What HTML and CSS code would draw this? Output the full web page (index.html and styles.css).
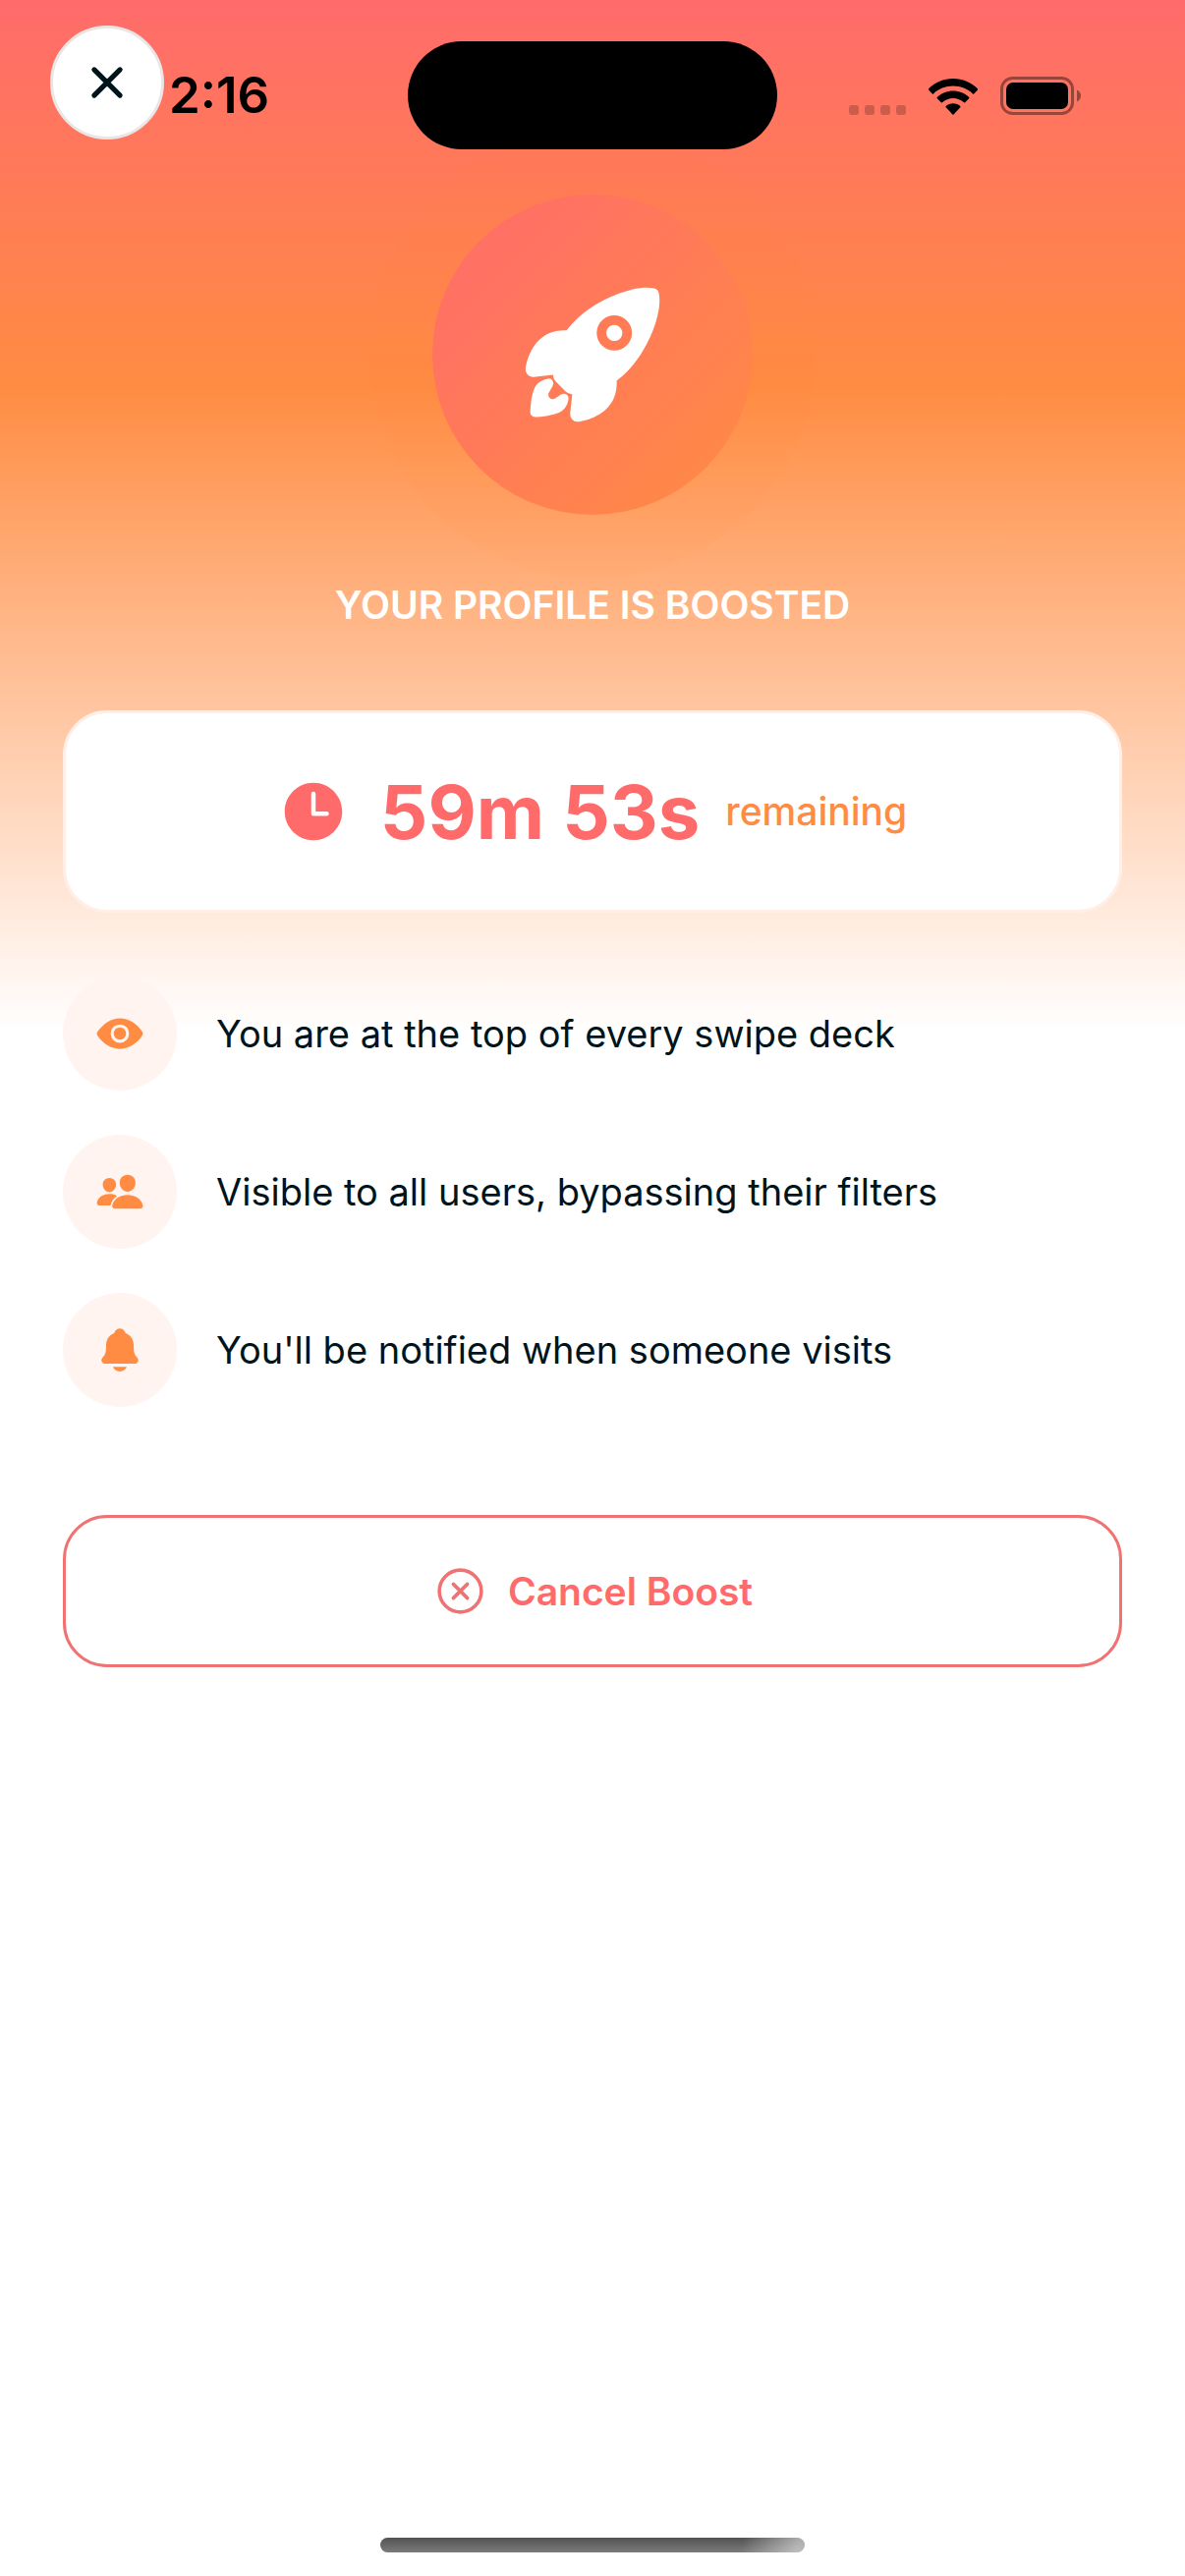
FILE: index.html
```html
<!DOCTYPE html>
<html lang="en">
<head>
  <meta charset="utf-8">
  <meta name="viewport" content="width=device-width, initial-scale=1">
  <title>Profile Boost</title>
  <link rel="stylesheet" href="styles.css">
</head>
<body>
  <div class="screen">
    <header class="status-bar">
      <span class="status-time">2:16</span>
      <span class="island"></span>
      <div class="status-icons">
        <svg class="signal" viewBox="0 0 58 10" aria-hidden="true">
          <rect x="0" width="10" height="10" rx="3"/><rect x="16" width="10" height="10" rx="3"/><rect x="32" width="10" height="10" rx="3"/><rect x="48" width="10" height="10" rx="3"/>
        </svg>
        <svg class="wifi" viewBox="0 0 50 37" aria-hidden="true">
          <path d="M25 0C34.700 0 43.500 3.800 50 10.300c.4.4.4.8 0 1.200L46.200 15.400c-.4.4-.8.4-1.200 0C39.800 10.400 32.800 7.500 25 7.500S10.200 10.400 5 15.400c-.4.4-.8.4-1.200 0L0 11.500c-.4-.4-.4-.8 0-1.200C6.500 3.800 15.300 0 25 0z"/>
          <path d="M25 12.500c6.200 0 11.900 2.400 16.200 6.400.4.4.4.9 0 1.300l-4 4c-.4.4-.8.4-1.200 0-2.900-2.700-6.800-4.300-11-4.300s-8.100 1.600-11 4.300c-.4.4-.8.4-1.200 0l-4-4c-.4-.4-.4-.9 0-1.300 4.300-4 10-6.400 16.200-6.400z"/>
          <path d="M25 25.300c2.800 0 5.300 1 7.300 2.700.4.400.4.8 0 1.200l-6.700 7.300c-.4.400-.8.400-1.200 0l-6.700-7.300c-.4-.4-.4-.8 0-1.200 2-1.700 4.500-2.700 7.300-2.700z"/>
        </svg>
        <svg class="battery" viewBox="0 0 82 39" aria-hidden="true">
          <rect class="battery-shell" x="1.500" y="1.500" width="72" height="36" rx="11"/>
          <rect x="6" y="6" width="63" height="27" rx="7"/>
          <path class="battery-tip" d="M78 13.500c2.400.9 4 3.200 4 6s-1.600 5.100-4 6z"/>
        </svg>
      </div>
    </header>

    <button class="close-button" type="button" aria-label="Close">
      <svg viewBox="0 0 512 512" aria-hidden="true"><path d="M368 368L144 144M368 144L144 368"/></svg>
    </button>

    <main class="content">
      <div class="hero">
        <svg class="hero-icon" viewBox="0 0 512 512" aria-hidden="true">
          <path d="M328.850 156.790a26.690 26.690 0 1018.880 7.810 26.600 26.600 0 00-18.880-7.810z"/>
          <path d="M477.440 50.060a.29.29 0 010-.09 20.400 20.400 0 00-15.130-15.300c-29.800-7.270-76.680.48-128.630 21.280-52.360 21-101.420 52-134.580 85.220A320.700 320.700 0 00169.550 175c-22.330-1-42 2.180-58.570 9.410-57.740 25.410-74.230 90.440-78.620 117.140a25 25 0 0027.190 29h.13l64.320-7.020c.08.82.17 1.570.24 2.260a34.360 34.360 0 009.900 20.720l31.390 31.410a34.270 34.270 0 0020.710 9.910l2.150.23-7 64.240v.13A25 25 0 00206 480a25.250 25.250 0 004.150-.34C237 475.340 302 459.050 327.340 401c7.170-16.460 10.340-36.050 9.450-58.340a314.780 314.780 0 0033.950-29.550c33.430-33.260 64.530-81.920 85.310-133.520 20.690-51.360 28.480-98.590 21.390-129.530zM370.380 224.940a58.770 58.770 0 110-83.070 58.300 58.300 0 010 83.070z"/>
          <path d="M161.930 386.440a16 16 0 00-11 2.670c-6.390 4.370-12.810 8.690-19.290 12.900-13.110 8.520-28.790-6.440-21-20l12.150-21a16 16 0 00-15.160-24.910A61.250 61.250 0 0072 353.560c-3.660 3.670-14.790 14.810-20.780 57.260A357.940 357.940 0 0048 447.590 16 16 0 0064 464h.4a359.870 359.870 0 0036.800-3.200c42.470-6 53.610-17.140 57.270-20.800a60.490 60.490 0 0017.390-35.740 16 16 0 00-13.930-17.820z"/>
        </svg>
      </div>

      <h1 class="title">YOUR PROFILE IS BOOSTED</h1>

      <section class="timer" aria-label="Time remaining">
        <svg class="timer-icon" viewBox="0 0 512 512" aria-hidden="true">
          <path d="M256 48C141.130 48 48 141.130 48 256s93.130 208 208 208 208-93.130 208-208S370.870 48 256 48zm96 240h-96a16 16 0 01-16-16V128a16 16 0 0132 0v128h80a16 16 0 010 32z"/>
        </svg>
        <span class="timer-value">59m 53s</span>
        <span class="timer-label">remaining</span>
      </section>

      <ul class="benefits">
        <li class="benefit">
          <span class="benefit-icon">
            <svg viewBox="0 0 512 512" aria-hidden="true"><circle cx="256" cy="256" r="64"/><path d="M490.840 238.600c-26.460-40.920-60.790-75.680-99.270-100.530C349 110.550 302 96 255.660 96c-42.520 0-84.330 12.150-124.270 36.110-40.730 24.430-77.630 60.120-109.680 106.070a31.920 31.920 0 00-.64 35.540c26.410 41.330 60.400 76.140 98.280 100.650C162 402 207.900 416 255.660 416c46.710 0 93.810-14.430 136.200-41.720 38.460-24.770 72.720-59.660 99.080-100.920a32.200 32.200 0 00-.1-34.760zM256 352a96 96 0 1196-96 96.110 96.110 0 01-96 96z"/></svg>
          </span>
          <span>You are at the top of every swipe deck</span>
        </li>
        <li class="benefit">
          <span class="benefit-icon">
            <svg viewBox="0 0 512 512" aria-hidden="true"><path d="M336 256c-20.560 0-40.440-9.180-56-25.840-15.130-16.250-24.370-37.920-26-61-1.740-24.620 5.770-47.260 21.140-63.760S312 80 336 80c23.830 0 45.380 9.060 60.700 25.520 15.470 16.620 23 39.220 21.260 63.630-1.670 23.110-10.900 44.770-26 61C376.440 246.820 356.570 256 336 256zM467.830 432H204.180a27.710 27.710 0 01-22-10.670 30.220 30.220 0 01-5.260-25.790c8.420-33.810 29.280-61.850 60.320-81.080C264.790 297.400 299.860 288 336 288c36.850 0 71 9 98.710 26.050 31.110 19.130 52 47.330 60.380 81.550a30.270 30.270 0 01-5.320 25.780A27.680 27.680 0 01467.830 432zM147 260c-35.190 0-66.130-32.720-69-72.930-1.420-20.600 5-39.650 18-53.620 12.860-13.830 31-21.450 51-21.450s38 7.660 50.930 21.570c13.100 14.080 19.500 33.090 18 53.520-2.870 40.200-33.800 72.910-68.930 72.910zM212.660 291.450c-17.590-8.600-40.420-12.900-65.650-12.900-29.460 0-58.070 7.680-80.570 21.620-25.510 15.830-42.670 38.880-49.600 66.710a27.390 27.390 0 004.790 23.360A25.320 25.320 0 0041.720 400h111a8 8 0 007.870-6.570c.11-.63.25-1.260.41-1.880 8.480-34.060 28.350-62.840 57.710-83.820a8 8 0 00-.63-13.390c-1.570-.92-3.370-1.890-5.420-2.890z"/></svg>
          </span>
          <span>Visible to all users, bypassing their filters</span>
        </li>
        <li class="benefit">
          <span class="benefit-icon">
            <svg viewBox="0 0 512 512" aria-hidden="true"><path d="M440.080 341.310c-1.660-2-3.290-4-4.890-5.930-22-26.610-35.310-42.670-35.310-118 0-39-9.330-71-27.720-95-13.560-17.730-31.890-31.180-56.050-41.120a3 3 0 01-.82-.67C306.600 51.490 282.820 32 256 32s-50.590 19.490-59.280 48.560a3.130 3.130 0 01-.81.65c-56.380 23.210-83.780 67.740-83.780 136.140 0 75.360-13.290 91.420-35.310 118-1.600 1.930-3.230 3.890-4.890 5.930a35.160 35.160 0 00-4.650 37.620c6.170 13 19.320 21.070 34.330 21.070H410.500c14.940 0 28-8.060 34.190-21a35.170 35.170 0 00-4.610-37.660zM256 480a80.060 80.060 0 0070.440-42.130 4 4 0 00-3.540-5.870H189.120a4 4 0 00-3.550 5.870A80.060 80.060 0 00256 480z"/></svg>
          </span>
          <span>You'll be notified when someone visits</span>
        </li>
      </ul>

      <button class="cancel-button" type="button">
        <svg viewBox="0 0 512 512" aria-hidden="true"><circle cx="256" cy="256" r="192"/><path d="M320 320L192 192M192 320l128-128"/></svg>
        Cancel Boost
      </button>
    </main>

    <div class="home-indicator"></div>
  </div>
</body>
</html>
```

FILE: styles.css
```css
:root {
  --coral: #ff6b6b;
  --orange: #ff8c42;
  --ink: #00141c;
  --peach: #fff4ef;
}

* {
  box-sizing: border-box;
}

body {
  margin: 0;
  background: #fff;
  color: var(--ink);
  font-family: Inter, "Liberation Sans", sans-serif;
  font-size: 39px;
  line-height: 48px;
}

button {
  margin: 0;
  padding: 0;
  font: inherit;
  cursor: pointer;
}

svg {
  display: block;
  flex: none;
  fill: currentColor;
}

.screen {
  position: relative;
  display: flex;
  flex-direction: column;
  min-height: 100vh;
  background: linear-gradient(to bottom, var(--coral) 0%, var(--orange) 15%, #fff 40%);
}

/* Status bar, kept above the glow round the hero */
.status-bar {
  position: relative;
  z-index: 1;
  display: grid;
  grid-template-columns: 1fr auto 1fr;
  align-items: center;
  padding: 42px 106px 0 172px;
  color: #000;
}

.status-time {
  font-size: 51px;
  font-weight: 600;
}

.island {
  width: 376px;
  height: 110px;
  margin-left: -66px;
  border-radius: 55px;
  background: #000;
}

.status-icons {
  display: flex;
  justify-content: flex-end;
  align-items: flex-end;
  gap: 23px;
}

.signal {
  width: 58px;
  height: 10px;
  opacity: 0.2;
}

.wifi {
  width: 50px;
  height: 37px;
}

.battery {
  width: 82px;
  height: 39px;
}

.battery-shell {
  fill: none;
  stroke: currentColor;
  stroke-width: 3;
  opacity: 0.4;
}

.battery-tip {
  opacity: 0.4;
}

/* Floats over the status bar */
.close-button {
  position: absolute;
  z-index: 2;
  top: 26px;
  left: 51px;
  display: grid;
  place-items: center;
  width: 116px;
  height: 116px;
  border: 3px solid #e9e6e5;
  border-radius: 50%;
  background: #fff;
  color: var(--ink);
}

.close-button svg {
  width: 60px;
  height: 60px;
  stroke: currentColor;
  stroke-width: 44px;
  stroke-linecap: round;
}

/* Content */
.content {
  display: flex;
  flex-direction: column;
  padding: 46px 64px;
}

.hero {
  display: grid;
  place-items: center;
  align-self: center;
  width: 326px;
  height: 326px;
  border-radius: 50%;
  background: linear-gradient(135deg, var(--coral), var(--orange));
  box-shadow: 0 0 0 64px rgba(255, 140, 66, 0.05);
  color: #fff;
}

.hero-icon {
  width: 156px;
  height: 156px;
}

.title {
  margin: 68px 0 0;
  color: #fff;
  font-size: 39px;
  font-weight: 600;
  text-align: center;
}

.timer {
  display: flex;
  align-items: center;
  justify-content: center;
  gap: 26px;
  margin-top: 83px;
  padding: 51px 24px;
  border: 3px solid #ffefe7;
  border-radius: 45px;
  background: #fff;
}

.timer-icon {
  width: 72px;
  height: 72px;
  margin-right: 6px;
  color: var(--coral);
}

.timer-value {
  color: var(--coral);
  font-size: 76px;
  font-weight: 700;
  line-height: 98px;
}

.timer-label {
  color: var(--orange);
  font-weight: 500;
}

.benefits {
  display: flex;
  flex-direction: column;
  gap: 45px;
  margin: 65px 0 0;
  padding: 0;
  font-size: 38px;
  list-style: none;
}

.benefit {
  display: flex;
  align-items: center;
  gap: 40px;
}

.benefit-icon {
  display: grid;
  flex: none;
  place-items: center;
  width: 116px;
  height: 116px;
  border-radius: 50%;
  background: var(--peach);
  color: var(--orange);
}

.benefit-icon svg {
  width: 50px;
  height: 50px;
}

.cancel-button {
  display: flex;
  align-items: center;
  justify-content: center;
  gap: 20px;
  min-height: 155px;
  margin-top: 110px;
  border: 3px solid #f07272;
  border-radius: 45px;
  background: #fff;
  color: var(--coral);
  font-weight: 600;
}

.cancel-button svg {
  width: 57px;
  height: 57px;
  fill: none;
  stroke: #f07272;
  stroke-width: 32;
  stroke-linecap: round;
}

.home-indicator {
  align-self: center;
  width: 432px;
  height: 15px;
  margin-top: auto;
  margin-bottom: 24px;
  border-radius: 8px;
  background:
    linear-gradient(100deg, transparent 85%, rgba(255, 255, 255, 0.5) 98%),
    linear-gradient(to bottom, #515251, #7b7b7b);
}
```
